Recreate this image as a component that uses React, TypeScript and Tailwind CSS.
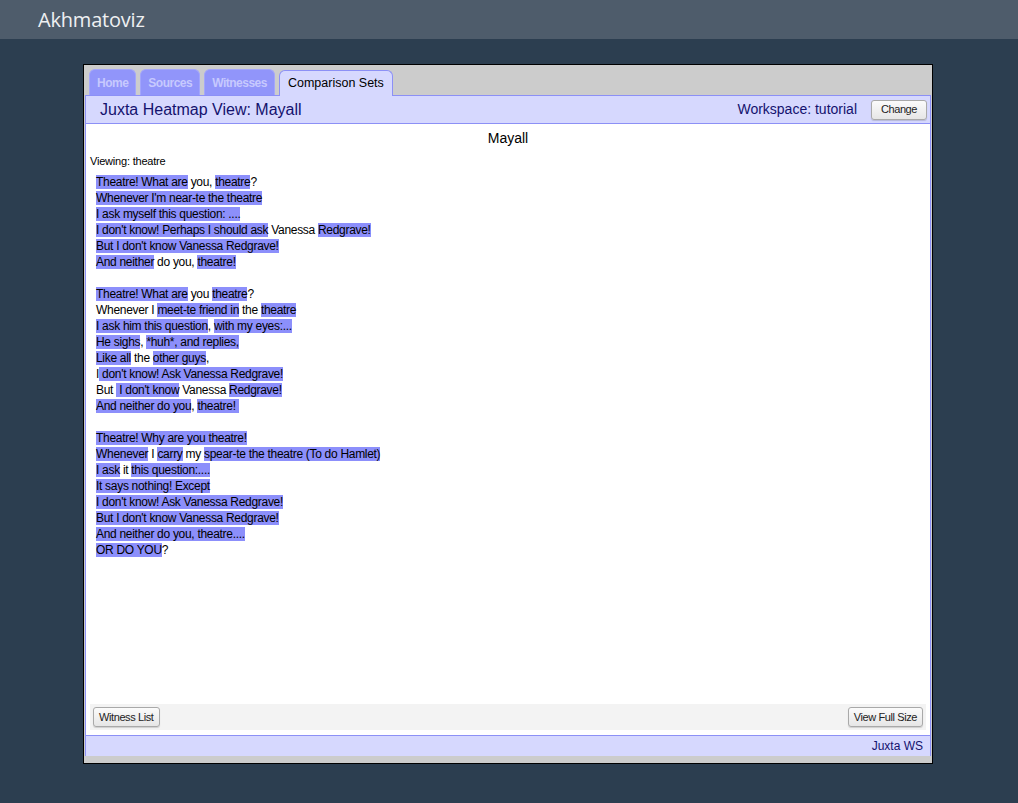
import React from 'react';

type Seg = [string, boolean];

// each line is a list of [text, highlighted] pieces
const stanzas: Seg[][][] = [
  [
    [['Theatre! What are', true], [' you, ', false], ['theatre', true], ['?', false]],
    [["Whenever I'm near-te the theatre", true]],
    [['I ask myself this question: ....', true]],
    [["I don't know! Perhaps I should ask", true], [' Vanessa ', false], ['Redgrave!', true]],
    [["But I don't know Vanessa Redgrave!", true]],
    [['And neither', true], [' do you, ', false], ['theatre!', true]],
  ],
  [
    [['Theatre! What are', true], [' you ', false], ['theatre', true], ['?', false]],
    [['Whenever I ', false], ['meet-te friend in', true], [' the ', false], ['theatre', true]],
    [['I ask him this question', true], [', ', false], ['with my eyes:...', true]],
    [['He sighs', true], [', ', false], ['*huh*, and replies,', true]],
    [['Like all', true], [' the ', false], ['other guys', true], [',', false]],
    [['I', false], [" don't know! Ask Vanessa Redgrave!", true]],
    [['But ', false], [" I don't know", true], [' Vanessa ', false], ['Redgrave!', true]],
    [['And neither do you', true], [', ', false], ['theatre! ', true]],
  ],
  [
    [['Theatre! Why are you theatre!', true]],
    [['Whenever', true], [' I ', false], ['carry', true], [' my ', false], ['spear-te the theatre (To do Hamlet)', true]],
    [['I ask', true], [' it ', false], ['this question:....', true]],
    [['It says nothing! Except', true]],
    [["I don't know! Ask Vanessa Redgrave!", true]],
    [["But I don't know Vanessa Redgrave!", true]],
    [['And neither do you, theatre....', true]],
    [['OR DO YOU', true], ['?', false]],
  ],
];

const tabs = ['Home', 'Sources', 'Witnesses'];

const Button = ({ label, wide }: { label: string; wide?: boolean }) => (
  <button
    className={`h-[20px] ${wide ? 'w-[56px]' : 'px-[5px]'} rounded-[3px] border border-[#a9a9a9] bg-gradient-to-b from-[#fbfbfb] to-[#e6e6e6] text-[11px] tracking-[-0.4px] text-[#222] leading-none shadow-[0_1px_1px_rgba(0,0,0,0.15)]`}
  >
    {label}
  </button>
);

export default function App() {
  return (
    <div className="min-h-[803px] bg-[#2c3e50] font-['Liberation_Sans',Arial,sans-serif]">
      <div className="h-[39px] bg-[#4e5c6b] flex items-center pl-[38px]">
        <span className="text-[20px] text-[#eef0f2] font-['Open_Sans',sans-serif] tracking-[-0.2px]">Akhmatoviz</span>
      </div>

      <div className="pt-[25px] pl-[83px]">
        <div className="w-[850px] h-[700px] border border-black bg-[#cccccc] flex flex-col px-[1px]">
          {/* tabs */}
          <div className="h-[30px] flex items-end gap-[4px] pl-[4px]">
            {tabs.map((t) => (
              <div
                key={t}
                className="h-[26px] px-[7px] flex items-center rounded-t-[6px] border border-b-0 border-[#a3a6fb] bg-[#9195fa] text-[12px] font-bold tracking-[-0.5px] text-[#c7c9fe]"
              >
                {t}
              </div>
            ))}
            <div className="h-[26px] px-[8px] flex items-center rounded-t-[6px] border border-b-0 border-[#8c90f6] bg-[#d6d8fe] text-[12.5px] text-black relative top-[1px]">
              Comparison Sets
            </div>
          </div>

          {/* panel */}
          <div className="flex-1 flex flex-col border border-[#8c90f6] border-b-0">
            <div className="h-[28px] bg-[#d6d8fe] border-b border-[#8c90f6] flex items-center pl-[14px] pr-[3px]">
              <span className="text-[16px] text-[#14126e]">Juxta Heatmap View: Mayall</span>
              <span className="ml-auto text-[14px] text-[#14126e] mr-[14px]">Workspace: tutorial</span>
              <Button label="Change" wide />
            </div>

            <div className="flex-1 bg-white flex flex-col px-[4px] pb-[5px]">
              <div className="text-center text-[14px] text-black pt-[6px] leading-[17px]">Mayall</div>
              <div className="text-[11px] text-black mt-[8px] leading-[13px] tracking-[-0.2px]">Viewing: theatre</div>
              <div className="flex-1 pl-[6px] pt-[6px] text-[12px] leading-[16px] tracking-[-0.3px] text-black">
                {stanzas.map((st, si) => (
                  <div key={si} className="mb-[16px]">
                    {st.map((line, li) => (
                      <div key={li} className="whitespace-pre">
                        {line.map(([txt, hl], k) => (
                          <span key={k} className={hl ? 'bg-[#8c8ffb]' : ''}>
                            {txt}
                          </span>
                        ))}
                      </div>
                    ))}
                  </div>
                ))}
              </div>
              <div className="h-[26px] bg-[#f3f3f3] flex items-center justify-between px-[3px]">
                <Button label="Witness List" />
                <Button label="View Full Size" />
              </div>
            </div>

            <div className="h-[21px] bg-[#d6d8fe] border-t border-[#8c90f6] flex items-center justify-end pr-[7px]">
              <span className="text-[12px] text-[#14126e]">Juxta WS</span>
            </div>
          </div>
          <div className="h-[7px]" />
        </div>
      </div>
    </div>
  );
}
